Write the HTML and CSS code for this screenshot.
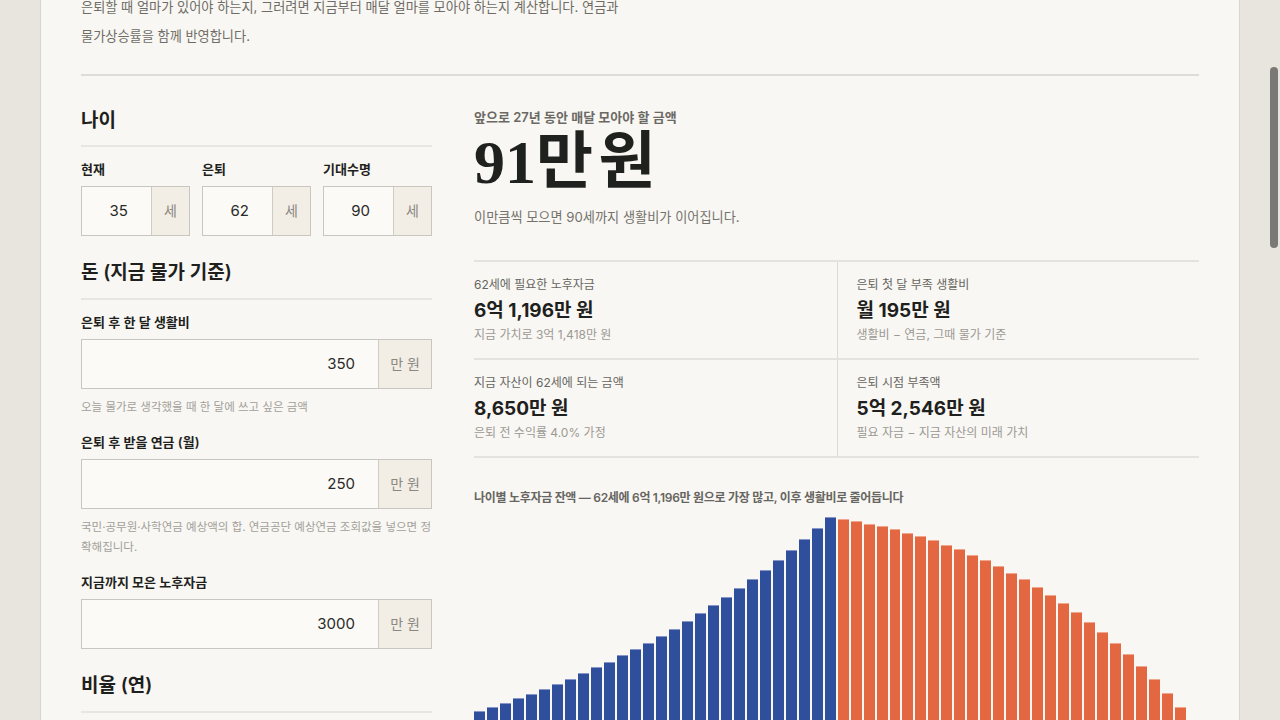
FILE: index.html
```html
<!DOCTYPE html>
<html lang="ko">
<head>
<meta charset="utf-8">
<title>노후자금 계산기</title>
<link rel="stylesheet" href="styles.css">
</head>
<body>
<div class="scroll-thumb"></div>
<main class="page">
  <header class="intro-wrap">
    <p class="intro">은퇴할 때 얼마가 있어야 하는지, 그러려면 지금부터 매달 얼마를 모아야 하는지 계산합니다. 연금과 물가상승률을 함께 반영합니다.</p>
  </header>
  <div class="layout">
    <section class="inputs">
      <h2 class="sec-title first">나이</h2>
      <div class="age-row">
        <div class="field">
          <div class="label">현재</div>
          <div class="input"><span class="val">35</span><span class="unit">세</span></div>
        </div>
        <div class="field">
          <div class="label">은퇴</div>
          <div class="input"><span class="val">62</span><span class="unit">세</span></div>
        </div>
        <div class="field">
          <div class="label">기대수명</div>
          <div class="input"><span class="val">90</span><span class="unit">세</span></div>
        </div>
      </div>

      <h2 class="sec-title">돈 (지금 물가 기준)</h2>
      <div class="field wide">
        <div class="label">은퇴 후 한 달 생활비</div>
        <div class="input"><span class="val">350</span><span class="unit">만 원</span></div>
        <p class="hint">오늘 물가로 생각했을 때 한 달에 쓰고 싶은 금액</p>
      </div>
      <div class="field wide">
        <div class="label">은퇴 후 받을 연금 (월)</div>
        <div class="input"><span class="val">250</span><span class="unit">만 원</span></div>
        <p class="hint">국민·공무원·사학연금 예상액의 합. 연금공단 예상연금 조회값을 넣으면 정확해집니다.</p>
      </div>
      <div class="field wide">
        <div class="label">지금까지 모은 노후자금</div>
        <div class="input"><span class="val">3000</span><span class="unit">만 원</span></div>
      </div>

      <h2 class="sec-title">비율 (연)</h2>
    </section>

    <section class="result">
      <div class="eyebrow">앞으로 27년 동안 매달 모아야 할 금액</div>
      <div class="big">91만 원</div>
      <p class="lead">이만큼씩 모으면 90세까지 생활비가 이어집니다.</p>

      <div class="stats">
        <div class="stat">
          <div class="stat-label">62세에 필요한 노후자금</div>
          <div class="stat-value">6억 1,196만 원</div>
          <div class="stat-sub">지금 가치로 3억 1,418만 원</div>
        </div>
        <div class="stat">
          <div class="stat-label">은퇴 첫 달 부족 생활비</div>
          <div class="stat-value">월 195만 원</div>
          <div class="stat-sub">생활비 − 연금, 그때 물가 기준</div>
        </div>
        <div class="stat">
          <div class="stat-label">지금 자산이 62세에 되는 금액</div>
          <div class="stat-value">8,650만 원</div>
          <div class="stat-sub">은퇴 전 수익률 4.0% 가정</div>
        </div>
        <div class="stat">
          <div class="stat-label">은퇴 시점 부족액</div>
          <div class="stat-value">5억 2,546만 원</div>
          <div class="stat-sub">필요 자금 − 지금 자산의 미래 가치</div>
        </div>
      </div>

      <div class="chart-caption">나이별 노후자금 잔액 — 62세에 6억 1,196만 원으로 가장 많고, 이후 생활비로 줄어듭니다</div>
      <div class="bars" id="bars"></div>
    </section>
  </div>
</main>
<script src="script.js"></script>
</body>
</html>
```

FILE: styles.css
```css
html, body {
  margin: 0;
  padding: 0;
  height: 100%;
  overflow: hidden;
}

body {
  background: #e8e5df;
  font-family: Inter, "Noto Sans CJK KR", sans-serif;
  color: #222;
}

.scroll-thumb {
  position: fixed;
  right: 2px;
  top: 67px;
  width: 8px;
  height: 181px;
  border-radius: 4px;
  background: #7b7975;
}

.page {
  width: 1118px;
  margin: 0 40px;
  padding: 0 40px;
  min-height: 100%;
  background: #f8f7f3;
  border-left: 1px solid #d8d5ce;
  border-right: 1px solid #d8d5ce;
}

.intro-wrap {
  margin-top: -7px;
  padding-bottom: 23px;
  border-bottom: 2px solid #dedcd6;
}

.intro {
  margin: 0;
  max-width: 560px;
  font-size: 13.2px;
  line-height: 29px;
  color: #6f6c66;
  word-break: keep-all;
}

.layout {
  display: grid;
  grid-template-columns: 351px 1fr;
  column-gap: 42px;
}

/* ---------- left column ---------- */
.sec-title {
  margin: 23px 0 0;
  padding-bottom: 11px;
  font-size: 19px;
  line-height: 28px;
  font-weight: 600;
  color: #1f1f1d;
  border-bottom: 2px solid #e8e6e0;
}

.sec-title.first {
  margin-top: 31px;
  padding-bottom: 10px;
}

.age-row {
  display: grid;
  grid-template-columns: repeat(3, 1fr);
  column-gap: 12px;
}

.label {
  margin-top: 12px;
  margin-bottom: 7px;
  font-size: 13px;
  line-height: 20px;
  font-weight: 600;
  color: #1f1f1d;
}

.field.wide + .field.wide .label {
  margin-top: 15px;
}

.input {
  display: flex;
  height: 48px;
  border: 1px solid #c9c6bf;
  background: #fbfaf7;
}

.val {
  flex: 1;
  text-align: right;
  padding-right: 23px;
  font-size: 15px;
  line-height: 48px;
  color: #2a2a28;
}

.unit {
  width: 37px;
  border-left: 1px solid #cfccc5;
  background: #f2eee6;
  text-align: center;
  font-size: 14px;
  line-height: 48px;
  color: #8b8882;
}

.wide .unit {
  width: 52px;
}

.hint {
  margin: 8px 0 0;
  font-size: 11.5px;
  line-height: 20px;
  color: #a3a09a;
}

/* ---------- right column ---------- */
.result {
  padding-top: 32px;
}

.eyebrow {
  font-size: 13px;
  line-height: 18px;
  font-weight: 600;
  color: #6b6964;
}

.big {
  margin-top: 4px;
  height: 64px;
  font-family: "Liberation Serif", "Noto Sans CJK KR", serif;
  font-weight: 700;
  font-size: 62px;
  line-height: 64px;
  word-spacing: -10px;
  color: #1f211e;
}

.lead {
  margin: 13px 0 0;
  font-size: 13.2px;
  line-height: 20px;
  color: #75726c;
}

.stats {
  margin-top: 33px;
  display: grid;
  grid-template-columns: 1fr 1fr;
  border-top: 2px solid #e5e3dd;
}

.stat {
  padding: 14px 20px 15px 0;
  border-bottom: 2px solid #e5e3dd;
}

.stat:nth-child(even) {
  padding-left: 19px;
  border-left: 1px solid #dcdad4;
}

.stat-label {
  font-size: 12px;
  line-height: 17px;
  color: #67655f;
}

.stat-value {
  margin-top: 6px;
  font-size: 19px;
  line-height: 24px;
  font-weight: 700;
  color: #1f1f1d;
}

.stat-sub {
  margin-top: 3px;
  font-size: 12px;
  line-height: 17px;
  color: #9c9993;
}

.chart-caption {
  margin-top: 31px;
  font-size: 12px;
  line-height: 17px;
  font-weight: 600;
  letter-spacing: -0.3px;
  color: #67655f;
}

.bars {
  margin-top: 5px;
  height: 210px;
  display: flex;
  align-items: flex-end;
  gap: 2px;
}

.bar {
  flex: 1;
  min-width: 0;
}

.bar.pre {
  background: #2f4e9c;
  box-shadow: inset 0 1px 0 #8796c6;
}

.bar.post {
  background: #e36841;
  box-shadow: inset 0 1px 0 #efa88e;
}
```

FILE: script.js
```js
(function () {
  var bars = document.getElementById('bars');
  var vals = [];
  var g = Math.pow(1.04, 27);
  var c = (61196 - 3000 * g) / ((g - 1) / 0.04);
  var b = 3000;
  for (var a = 35; a <= 62; a++) {
    vals.push({ v: b, cls: 'pre' });
    if (a < 62) b = b * 1.04 + c;
  }
  b = 61196;
  var w = 2340;
  for (var a2 = 63; a2 <= 89; a2++) {
    b = (b - w) * 1.03;
    w = w * 1.025;
    vals.push({ v: Math.max(b, 0), cls: 'post' });
  }
  vals.push({ v: 0, cls: 'post' });
  var max = 61196;
  vals.forEach(function (d) {
    var el = document.createElement('div');
    el.className = 'bar ' + d.cls;
    el.style.height = (d.v / max * 204).toFixed(1) + 'px';
    bars.appendChild(el);
  });
})();
```
